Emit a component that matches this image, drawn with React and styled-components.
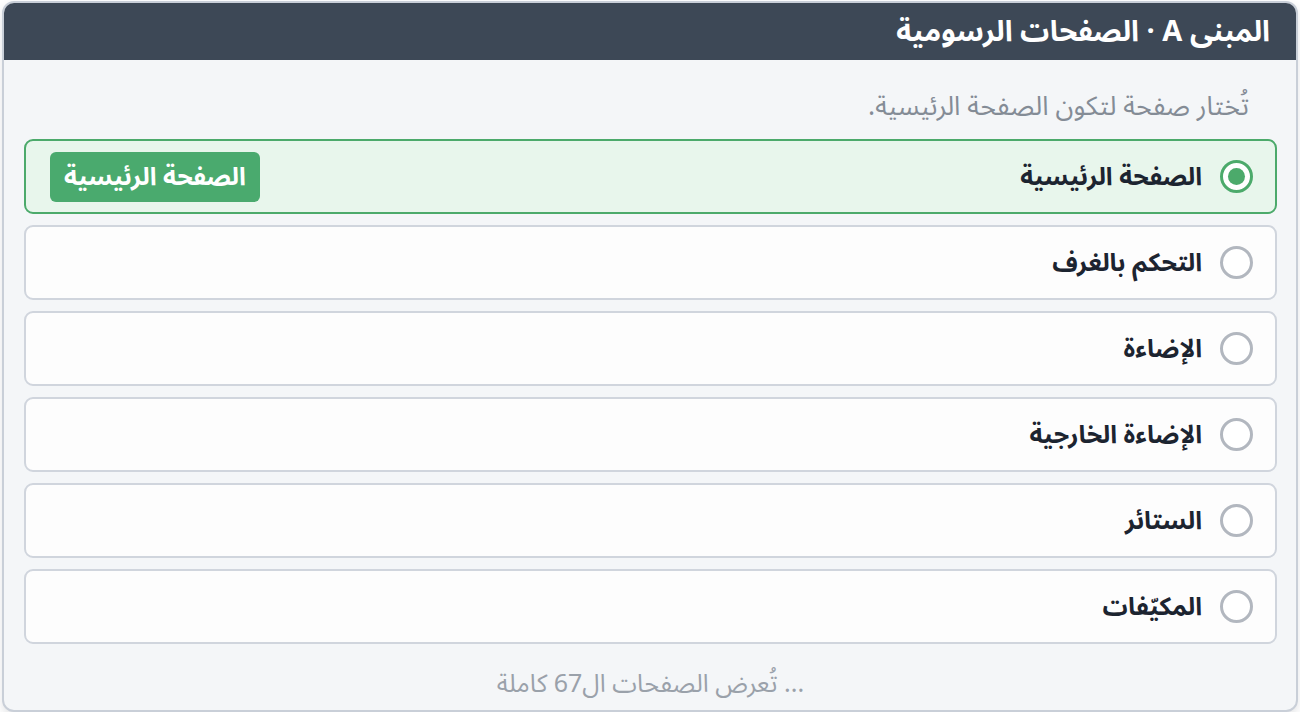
import styled, { createGlobalStyle } from "styled-components";

const GlobalStyle = createGlobalStyle`
    html, body {
        margin: 0;
        padding: 0;
        background: #ffffff;
        font-family: "Noto Sans Arabic", "Noto Sans Arabic UI", "Noto Naskh Arabic", "Noto Sans", "DejaVu Sans", sans-serif;
    }
`;

const pages = [
    { id: "home", name: "الصفحة الرئيسية" },
    { id: "rooms", name: "التحكم بالغرف" },
    { id: "lights", name: "الإضاءة" },
    { id: "outdoor", name: "الإضاءة الخارجية" },
    { id: "blinds", name: "الستائر" },
    { id: "ac", name: "المكيّفات" },
];

export default function App() {
    const selected = "home";

    return (
        <>
            <GlobalStyle />
            <Page dir="rtl">
                <Card>
                    <Header>المبنى A · الصفحات الرسومية</Header>
                    <Body>
                        <Hint>تُختار صفحة لتكون الصفحة الرئيسية.</Hint>
                        <List>
                            {pages.map((page) => (
                                <Row key={page.id} $active={page.id === selected}>
                                    <Radio $active={page.id === selected} />
                                    <Label>{page.name}</Label>
                                    {page.id === selected && (
                                        <Badge>الصفحة الرئيسية</Badge>
                                    )}
                                </Row>
                            ))}
                        </List>
                        <Footer>... تُعرض الصفحات ال67 كاملة</Footer>
                    </Body>
                </Card>
            </Page>
        </>
    );
}

const Page = styled.div`
    padding: 1px 2px 0 2px;
`;

const Card = styled.div`
    border: 2px solid #c9cfd8;
    border-radius: 12px;
    overflow: hidden;
    background: #f4f6f8;
    box-shadow: 0 4px 8px rgba(30, 40, 55, 0.12);
`;

const Header = styled.div`
    background: #3d4856;
    color: #ffffff;
    font-size: 29px;
    font-weight: 700;
    height: 57px;
    display: flex;
    align-items: center;
    padding: 0 26px;
`;

const Body = styled.div`
    display: flex;
    flex-direction: column;
    padding: 31px 19px 8px 20px;
`;

const Hint = styled.div`
    color: #848c96;
    font-size: 26.5px;
    padding: 0 28px 0 0;
    height: 33px;
    line-height: 33px;
    margin-bottom: 15px;
`;

const List = styled.div`
    display: flex;
    flex-direction: column;
    gap: 11px;
`;

const Row = styled.div`
    display: flex;
    align-items: center;
    gap: 18px;
    height: 71px;
    padding: 0 22px 0 24px;
    border: 2px solid ${(props) => (props.$active ? "#4caa6b" : "#d0d5dd")};
    border-radius: 9px;
    background: ${(props) => (props.$active ? "#e8f6ec" : "#fdfdfd")};
`;

const Radio = styled.span`
    flex: none;
    box-sizing: border-box;
    width: 33px;
    height: 33px;
    border-radius: 50%;
    border: 3px solid ${(props) => (props.$active ? "#4caa6b" : "#b2b7bf")};
    background: #ffffff;
    display: flex;
    align-items: center;
    justify-content: center;

    &::after {
        content: "";
        width: 17px;
        height: 17px;
        border-radius: 50%;
        background: #4caa6b;
        display: ${(props) => (props.$active ? "block" : "none")};
    }
`;

const Label = styled.span`
    font-size: 25px;
    font-weight: 700;
    color: #1c2430;
`;

const Badge = styled.span`
    margin-right: auto;
    background: #4aaa6e;
    color: #ffffff;
    font-size: 25px;
    font-weight: 700;
    height: 50px;
    padding: 0 14px;
    border-radius: 6px;
    display: flex;
    align-items: center;
`;

const Footer = styled.div`
    text-align: center;
    color: #9aa1aa;
    font-size: 25px;
    height: 36px;
    line-height: 36px;
    margin-top: 22px;
`;
